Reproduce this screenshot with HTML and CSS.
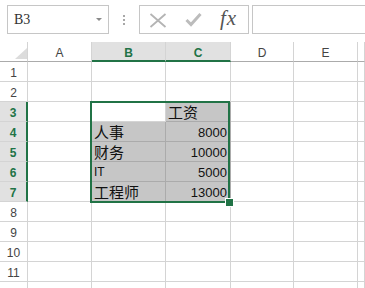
FILE: index.html
```html
<!DOCTYPE html>
<html>
<head>
<meta charset="utf-8">
<link rel="stylesheet" href="styles.css">
</head>
<body>
<div class="app">
  <div class="fbar">
    <div class="namebox"><span class="ref">B3</span><span class="caret"></span></div>
    <div class="dots"><i></i><i></i><i></i></div>
    <div class="btns">
      <svg class="ico-x" width="18" height="15" viewBox="0 0 18 15"><path d="M1.5 1 L16.5 14 M16.5 1 L1.5 14" stroke="#b4b4b4" stroke-width="1.8" fill="none"/></svg>
      <svg class="ico-ok" width="17" height="14" viewBox="0 0 17 14"><path d="M1.5 7 L6 11.5 L15.5 1" stroke="#bcbcbc" stroke-width="3" fill="none"/></svg>
      <span class="fx">fx</span>
    </div>
    <div class="formula"></div>
  </div>
  <div class="sheet">
    <div class="c corner"><div class="tri"></div></div>
    <div class="c ch">A</div><div class="c ch selh">B</div><div class="c ch selh">C</div><div class="c ch">D</div><div class="c ch">E</div><div class="c ch"></div>

    <div class="c rh">1</div><div class="c"></div><div class="c"></div><div class="c"></div><div class="c"></div><div class="c"></div><div class="c"></div>
    <div class="c rh">2</div><div class="c"></div><div class="c"></div><div class="c"></div><div class="c"></div><div class="c"></div><div class="c"></div>
    <div class="c rh selr">3</div><div class="c"></div><div class="c txt"></div><div class="c sel txt">工资</div><div class="c"></div><div class="c"></div><div class="c"></div>
    <div class="c rh selr">4</div><div class="c"></div><div class="c sel txt">人事</div><div class="c sel num">8000</div><div class="c"></div><div class="c"></div><div class="c"></div>
    <div class="c rh selr">5</div><div class="c"></div><div class="c sel txt">财务</div><div class="c sel num">10000</div><div class="c"></div><div class="c"></div><div class="c"></div>
    <div class="c rh selr">6</div><div class="c"></div><div class="c sel txt latin">IT</div><div class="c sel num">5000</div><div class="c"></div><div class="c"></div><div class="c"></div>
    <div class="c rh selr">7</div><div class="c"></div><div class="c sel txt">工程师</div><div class="c sel num">13000</div><div class="c"></div><div class="c"></div><div class="c"></div>
    <div class="c rh">8</div><div class="c"></div><div class="c"></div><div class="c"></div><div class="c"></div><div class="c"></div><div class="c"></div>
    <div class="c rh">9</div><div class="c"></div><div class="c"></div><div class="c"></div><div class="c"></div><div class="c"></div><div class="c"></div>
    <div class="c rh">10</div><div class="c"></div><div class="c"></div><div class="c"></div><div class="c"></div><div class="c"></div><div class="c"></div>
    <div class="c rh">11</div><div class="c"></div><div class="c"></div><div class="c"></div><div class="c"></div><div class="c"></div><div class="c"></div>
    <div class="c rh"></div><div class="c"></div><div class="c"></div><div class="c"></div><div class="c"></div><div class="c"></div><div class="c"></div>

    <div class="selection"></div>
    <div class="handle"></div>
  </div>
</div>
</body>
</html>
```
FILE: styles.css
```css
html, body {
  margin: 0;
  padding: 0;
  background: #fff;
  overflow: hidden;
}
.app {
  width: 365px;
  height: 288px;
  overflow: hidden;
  font-family: "Liberation Sans", Arial, sans-serif;
}
.fbar {
  height: 42px;
  box-sizing: border-box;
  padding: 5px 0 0 7px;
  display: flex;
  align-items: flex-start;
}
.namebox {
  width: 102px;
  height: 29px;
  box-sizing: border-box;
  border: 1px solid #c6c6c6;
  display: flex;
  align-items: center;
  justify-content: space-between;
  padding: 0 6px 0 6px;
}
.ref {
  font-family: "Liberation Serif", "Times New Roman", serif;
  font-size: 14px;
  color: #333;
  padding-top: 1px;
}
.caret {
  width: 0;
  height: 0;
  border-left: 3px solid transparent;
  border-right: 3px solid transparent;
  border-top: 3px solid #8a8a8a;
}
.dots {
  width: 30px;
  height: 29px;
  display: flex;
  flex-direction: column;
  align-items: center;
  justify-content: center;
  gap: 2px;
}
.dots i {
  display: block;
  width: 2px;
  height: 2px;
  background: #a8a8a8;
}
.btns {
  width: 110px;
  height: 29px;
  box-sizing: border-box;
  border: 1px solid #c6c6c6;
  display: flex;
  align-items: center;
  padding-left: 9px;
}
.ico-x { margin-top: 1px; }
.ico-ok { margin-left: 18px; margin-top: 1px; }
.fx {
  font-family: "Liberation Serif", "Times New Roman", serif;
  font-style: italic;
  font-size: 21px;
  color: #555;
  margin-left: 18px;
  margin-top: -3px;
  letter-spacing: 1px;
}
.formula {
  margin-left: 3px;
  flex: 1;
  height: 29px;
  box-sizing: border-box;
  border: 1px solid #c6c6c6;
  border-right: none;
}
.sheet {
  position: relative;
  display: grid;
  grid-template-columns: 28px 64px 74px 65px 63px 64px 1fr;
  grid-auto-rows: 20px;
}
.c {
  box-sizing: border-box;
  border-right: 1px solid #d4d4d4;
  border-bottom: 1px solid #d4d4d4;
  background: #fff;
  overflow: hidden;
  white-space: nowrap;
}
.corner {
  display: flex;
  align-items: flex-end;
  justify-content: flex-end;
  padding-bottom: 2px;
  border-bottom-color: #ababab;
}
.tri {
  width: 0;
  height: 0;
  border-left: 12px solid transparent;
  border-bottom: 11px solid #dcdcdc;
}
.ch {
  font-size: 12px;
  color: #444;
  text-align: center;
  line-height: 22px;
  border-bottom-color: #ababab;
}
.selh {
  background: #e1e1e1;
  color: #217346;
  font-weight: bold;
  border-bottom: 2px solid #217346;
}
.rh {
  font-size: 12px;
  color: #444;
  text-align: center;
  line-height: 22px;
}
.selr {
  background: #e1e1e1;
  color: #217346;
  font-weight: bold;
  border-right: 2px solid #217346;
}
.sel {
  background: #c6c6c6;
  border-right-color: #ababab;
  border-bottom-color: #ababab;
}
.txt {
  font-family: "Noto Sans CJK SC", "Liberation Sans", sans-serif;
  font-size: 15px;
  line-height: 19px;
  color: #111;
  padding-left: 2px;
}
.latin {
  font-family: "Liberation Sans", Arial, sans-serif;
  font-size: 12px;
  line-height: 21px;
}
.num {
  font-family: "Liberation Sans", Arial, sans-serif;
  font-size: 13px;
  line-height: 21px;
  color: #111;
  text-align: right;
  padding-right: 3px;
}
.selection {
  position: absolute;
  left: 90px;
  top: 59px;
  width: 140px;
  height: 102px;
  box-sizing: border-box;
  border: 2px solid #217346;
}
.handle {
  position: absolute;
  left: 225px;
  top: 156px;
  width: 9px;
  height: 9px;
  box-sizing: border-box;
  background: #217346;
  border: 1px solid #fff;
}
```
